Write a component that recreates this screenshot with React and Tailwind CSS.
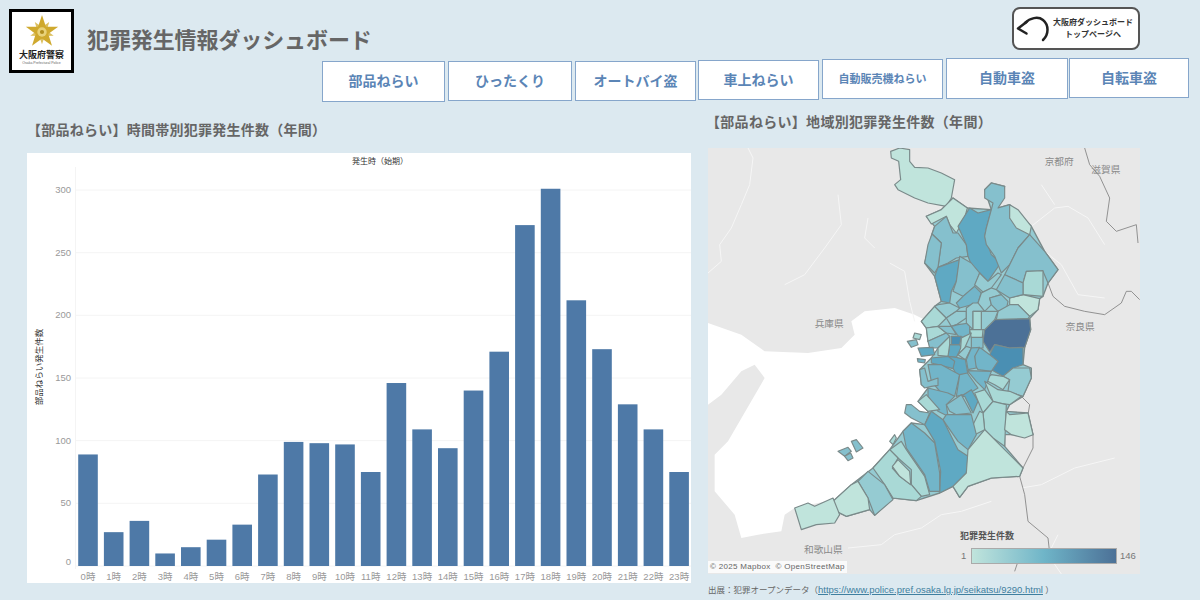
import React from 'react';

const navItems = [
  { label: '部品ねらい', cls: 'w-[123px] h-[41px] mt-[3px] text-[14px]' },
  { label: 'ひったくり', cls: 'w-[124px] h-[40px] mt-[3px] ml-[3px] text-[14px]' },
  { label: 'オートバイ盗', cls: 'w-[121px] h-[40px] mt-[3px] ml-[3px] text-[14px]' },
  { label: '車上ねらい', cls: 'w-[121px] h-[40px] mt-[2px] ml-[2px] text-[14px]' },
  { label: '自動販売機ねらい', cls: 'w-[121px] h-[40px] mt-[1px] ml-[3px] text-[11px]' },
  { label: '自動車盗', cls: 'w-[122px] h-[41px] ml-[3px] text-[14px]' },
  { label: '自転車盗', cls: 'w-[120px] h-[40px] ml-[1px] text-[14px]' },
];

const hours = [89, 27, 36, 10, 15, 21, 33, 73, 99, 98, 97, 75, 146, 109, 94, 140, 171, 272, 301, 212, 173, 129, 109, 75];
const ticks = [0, 50, 100, 150, 200, 250, 300];

// zero line and scale in panel coordinates (panel origin 27,153)
const BASE = 413;
const SCALE = 1.2533;

const L0 = '#c0e4dc';
const L1 = '#a9d9d6';
const L2 = '#95cbd2';
const M1 = '#85c0cd';
const M2 = '#72b5c9';
const D1 = '#5fa9c3';
const D2 = '#4a8fb3';
const D3 = '#4c7197';

// everything below is in the map's 3x coordinates (1296x1278)
const land = '650,345 672,258 680,235 655,205 700,185 735,150 778,180 850,185 830,125 850,105 890,115 870,180 905,170 970,235 1010,310 1050,365 1020,405 1005,445 995,452 990,485 965,512 968,545 950,598 945,650 970,660 970,690 945,745 905,770 895,790 960,795 975,860 890,860 890,895 945,960 935,985 850,990 780,1015 755,1048 735,1015 695,1035 625,1058 555,1050 500,1102 485,1085 415,1105 385,1090 375,1060 430,1010 495,960 545,905 585,850 610,825 650,830 660,790 630,760 660,720 640,710 635,665 670,630 690,600 660,580 655,540 640,520 680,475 700,460 680,385';

const regions = [
  [L0, '548,10 575,0 605,5 605,40 620,58 660,60 700,75 740,95 730,150 715,175 660,165 620,150 570,125 560,110 578,95 572,40 550,30'],
  [L0, '655,205 700,185 735,150 778,180 770,210 745,255 725,230 715,205 670,228'],
  [M1, '680,235 715,205 735,255 750,255 775,290 780,325 745,330 720,345 690,358 700,285 672,258'],
  [M1, '672,258 700,285 690,358 680,375 650,345 660,290'],
  [D1, '750,235 785,180 810,195 850,185 835,240 830,265 850,320 878,345 840,400 815,375 790,350 780,325 775,290'],
  [M1, '850,185 855,165 830,150 830,125 850,105 890,115 890,150 870,180 905,170 905,210 965,260 930,300 905,350 880,375 860,325 835,290 830,265 835,240'],
  [L0, '905,170 930,185 970,235 965,260 925,240 905,210'],
  [M1, '965,260 1010,310 1050,365 1020,405 1005,370 955,370 945,405 890,380 930,300'],
  [L1, '955,370 1005,368 1005,445 945,440 945,405'],
  [L0, '905,450 945,440 995,452 990,485 965,505 930,470 905,470'],
  [M1, '890,380 945,405 945,440 905,450 865,425'],
  [D1, '690,358 755,335 745,400 730,430 725,465 700,460 680,385'],
  [M1, '755,325 790,345 815,375 800,415 765,445 735,430 745,400'],
  [L2, '815,375 840,400 870,375 880,380 850,420 825,432 800,410'],
  [M2, '765,445 800,415 820,435 810,465 755,480 745,465'],
  [L2, '820,435 850,420 865,425 880,440 845,450 850,470 830,490 810,465'],
  [M1, '845,450 880,440 900,460 895,485 870,490 850,470'],
  [L2, '870,490 905,470 930,470 965,505 960,512 865,515'],
  [D3, '860,515 965,512 968,545 950,598 905,600 860,590 845,612 825,580 830,545'],
  [D2, '860,590 905,600 945,598 945,650 915,660 885,685 850,665 870,640 845,620'],
  [M2, '800,600 815,598 845,620 870,640 850,670 810,665 800,650'],
  [L2, '885,685 915,660 965,660 970,690 945,745 900,730 905,695'],
  [L1, '830,695 850,680 885,685 905,695 885,725 860,710'],
  [L1, '640,520 680,475 715,510 690,535 655,540'],
  [L2, '690,470 725,465 755,480 745,490 715,510 680,475'],
  [L1, '655,540 690,535 715,555 660,580'],
  [L2, '715,510 745,490 775,490 775,510 745,530 730,535'],
  [M1, '690,535 730,535 745,560 715,555'],
  [M1, '660,580 715,555 725,565 690,600 665,600'],
  [M2, '750,530 785,525 785,560 755,570 730,535'],
  [L2, '775,480 795,465 810,465 830,490 795,490 795,545 775,525'],
  [L2, '830,490 870,490 860,515 830,545 820,545 820,490'],
  [L1, '795,490 820,490 820,545 795,545'],
  [L1, '785,545 825,545 823,568 790,570'],
  [D1, '725,590 755,590 760,600 745,628 720,625'],
  [D2, '730,565 760,565 755,590 730,590'],
  [L1, '690,600 725,565 725,590 720,625 690,622'],
  [L1, '760,570 790,555 770,600 750,620 758,600'],
  [M1, '790,568 825,568 825,600 790,600'],
  [L2, '750,620 775,595 790,600 772,635'],
  [M2, '775,635 790,600 815,598 800,625 805,660 780,665'],
  [D1, '720,625 745,628 772,635 780,680 745,680 735,660'],
  [D1, '670,630 720,625 740,640 735,662 690,650 670,645'],
  [M2, '660,650 700,650 755,680 740,745 700,735 670,700'],
  [M2, '755,680 778,675 810,720 785,735 745,745'],
  [M2, '778,668 850,670 830,725 805,700'],
  [M1, '598,580 625,575 630,590 610,598'],
  [L1, '620,555 640,560 635,575 615,570'],
  [D1, '630,600 675,598 680,620 640,625'],
  [M2, '628,632 652,635 650,645 630,642'],
  [M1, '635,665 650,660 660,700 690,690 690,712 670,715 650,720 640,710'],
  [M2, '660,720 720,735 740,745 715,770 720,805 690,790 660,745'],
  [L1, '630,760 655,740 695,785 660,790'],
  [M1, '595,770 610,770 635,790 665,795 650,830 610,810 590,795'],
  [D1, '790,725 810,760 795,795 770,745 760,745'],
  [M1, '715,770 760,740 790,795 745,800 725,790'],
  [L1, '800,735 830,725 855,760 825,795'],
  [L1, '830,700 870,725 905,730 940,745 905,770 870,765 855,760'],
  [L1, '825,795 855,760 895,770 890,895 855,870 830,845'],
  [L0, '895,790 905,800 960,795 975,860 950,870 910,860 890,845'],
  [L1, '815,790 825,795 830,845 800,860 795,830'],
  [M2, '705,815 715,800 790,800 805,860 780,905 750,880 715,830'],
  [D1, '650,830 670,790 705,815 750,905 780,925 775,975 735,1015 695,1035 698,970 680,880'],
  [M2, '585,850 610,825 650,855 680,885 695,975 695,1030 665,1030 650,980 595,900'],
  [L0, '780,905 830,845 880,895 945,960 935,985 850,990 780,1015 755,1048 735,1015 775,975'],
  [L1, '545,905 580,880 595,905 650,985 665,1040 640,1045 610,1010 610,965 570,930'],
  [L1, '495,960 545,905 570,930 553,960 575,985 610,1010 640,1045 625,1058 555,1050 530,1010'],
  [L0, '553,955 570,935 605,970 608,1010 575,985'],
  [L2, '450,1000 480,970 530,1010 555,1055 500,1102 480,1050'],
  [L0, '375,1060 430,1010 450,1000 480,1050 485,1085 415,1105 385,1090'],
  [L0, '260,1080 300,1065 320,1075 375,1050 395,1100 380,1125 325,1130 280,1145'],
  [L1, '545,880 560,860 565,870 555,890'],
  [M1, '390,910 420,898 430,910 410,925'],
  [M1, '430,880 445,875 465,900 445,912'],
  [M1, '410,925 428,915 435,930 420,938'],
];

const rivers = [
  '0,375 40,340 35,290 70,240 100,170 125,110 135,30 120,0',
  '545,345 590,370 605,460 620,520',
  '970,235 1040,180 1080,175 1140,210 1190,290',
  '1010,310 1060,350 1110,440 1190,450',
  '1000,110 1040,170',
  '230,410 290,380 350,300 400,230 390,140',
  '420,1200 520,1190 560,1160 640,1140 700,1100 760,1090 850,1060',
  '940,1020 1000,1010 1100,960 1220,930',
  '1060,1278 1020,1220 1050,1160',
  '480,210 470,270 500,300',
];

const borders = [
  '1020,405 1035,445 1070,475 1130,490 1190,500 1240,465 1255,430 1270,430 1295,455',
  '1130,0 1145,50 1175,85 1205,150 1195,220 1225,250 1285,230 1290,285',
  '935,985 950,1040 960,1120 1020,1170 1025,1215 970,1215 935,1225 920,1270',
  '940,745 965,770 960,800 975,860 975,900 945,960',
];

const mapLabels = [
  ['京都府', 1010, 50],
  ['滋賀県', 1150, 76],
  ['兵庫県', 320, 538],
  ['奈良県', 1073, 547],
  ['和歌山県', 288, 1215],
];

function Logo() {
  const rays = [0, 72, 144, 216, 288];
  const minor = [36, 108, 180, 252, 324];
  return (
    <div className="w-[65px] h-[64px] shrink-0 border-[3px] border-black bg-white flex flex-col items-center">
      <svg width="36" height="34" viewBox="-18 -18 36 36" className="mt-[3px]">
        {minor.map((a) => (
          <polygon key={a} points="-3.5,-3 0,-13 3.5,-3" fill="#dcc060" transform={`rotate(${a})`} />
        ))}
        {rays.map((a) => (
          <polygon key={a} points="-5,-3 0,-18 5,-3" fill="#cfa92e" transform={`rotate(${a})`} />
        ))}
        <circle r="5" fill="#e8d27a" />
        <circle r="2.2" fill="#b08d1e" />
      </svg>
      <div className="text-[9px] leading-[11px] font-bold text-[#222] mt-[1px]">大阪府警察</div>
      <div className="text-[3.5px] leading-[5px] text-[#666]">Osaka Prefectural Police</div>
    </div>
  );
}

function BarChart() {
  return (
    <div className="w-[664px] h-[430px] bg-white">
      <svg width="664" height="430" viewBox="0 0 664 430">
        <text x="353" y="11" fontSize="8" fill="#333" textAnchor="middle">発生時（始期）</text>
        <text transform="translate(15,214) rotate(-90)" fontSize="8.5" fill="#333" textAnchor="middle">部品ねらい発生件数</text>
        <line x1="48.5" y1="14" x2="48.5" y2="416" stroke="#f4f4f4" />
        {ticks.map((t) => (
          <g key={t}>
            <line x1="48" x2="664" y1={BASE - t * SCALE} y2={BASE - t * SCALE} stroke="#f4f4f4" />
            <text x="44" y={BASE - t * SCALE + (t === 0 ? -1 : 3)} fontSize="9.5" fill="#999" textAnchor="end">{t}</text>
          </g>
        ))}
        {hours.map((v, i) => (
          <g key={i}>
            <rect x={51.2 + i * 25.7} y={BASE - v * SCALE} width="19.6" height={v * SCALE} fill="#4e79a7" />
            <text x={61 + i * 25.7} y="427" fontSize="9.5" fill="#999" textAnchor="middle">{i}時</text>
          </g>
        ))}
      </svg>
    </div>
  );
}

function OsakaMap() {
  return (
    <div className="relative w-[432px] h-[426px] bg-[#e8e8e8] overflow-hidden">
      <svg width="432" height="426" viewBox="0 0 1296 1278" className="block">
        {/* sea, runs under the coastal wards */}
        <polygon
          fill="#ffffff"
          points="0,525 100,560 170,610 300,615 400,600 440,560 430,520 470,490 560,480 620,500 680,530 700,600 700,740 660,790 640,850 600,890 520,960 460,1010 400,1050 260,1080 230,1100 220,1150 150,1160 100,1170 80,1100 20,1030 20,920 60,880 170,690 140,650 100,670 40,740 0,770"
        />
        {rivers.map((p, i) => (
          <polyline key={i} points={p} fill="none" stroke="#f6f6f6" strokeWidth="3" />
        ))}
        {borders.map((p, i) => (
          <polyline key={i} points={p} fill="none" stroke="#808080" strokeWidth="2.5" strokeLinejoin="round" />
        ))}
        {mapLabels.map(([t, x, y]) => (
          <text key={t} x={x} y={y} fontSize="29" fill="#8a8a8a">{t}</text>
        ))}
        <polygon points={land} fill={L2} stroke="#7a8a8a" strokeWidth="4" strokeLinejoin="round" />
        {regions.map(([fill, pts], i) => (
          <polygon key={i} points={pts} fill={fill} stroke="#7a8a8a" strokeWidth="3.5" strokeLinejoin="round" />
        ))}
      </svg>
      <div className="absolute left-0 bottom-[1px] bg-white/80 px-[2px] text-[8px] leading-[12px] tracking-[0.3px] text-[#666]">© 2025 Mapbox&nbsp;&nbsp;© OpenStreetMap</div>
      <div className="absolute left-[252px] top-[382px] text-[9px] leading-[12px] font-bold text-[#555]">犯罪発生件数</div>
      <div className="absolute left-[253px] top-[401px] text-[9.5px] leading-[14px] text-[#777]">1</div>
      <div className="absolute left-[263px] top-[400px] w-[146px] h-[16px] border border-[#aaa] bg-linear-to-r from-[#c0e4dc] via-[#6fb5c8] to-[#4c7197]" />
      <div className="absolute left-[412px] top-[401px] text-[9.5px] leading-[14px] text-[#777]">146</div>
    </div>
  );
}

export default function App() {
  return (
    <div className="w-[1200px] h-[600px] overflow-hidden bg-[#dce9f0] font-['Liberation_Sans','Noto_Sans_CJK_JP',sans-serif]">
      {/* header */}
      <div className="flex h-[102px]">
        <div className="w-[322px] shrink-0 flex items-start pl-[9px] pt-[9px]">
          <Logo />
          <h1 className="ml-[13px] mt-[15px] text-[22px] leading-[34px] font-bold tracking-[-0.1px] text-[#666] whitespace-nowrap">犯罪発生情報ダッシュボード</h1>
        </div>
        <div className="flex flex-col pt-[7px]">
          <button className="ml-[690px] w-[128px] h-[43px] shrink-0 flex items-center rounded-[8px] border-2 border-[#555] bg-white">
            <svg width="34" height="30" viewBox="0 0 34 30" className="ml-[2px] shrink-0">
              <path d="M9 9 C14 4 22 2 27 6 C33 11 33 20 27 26" fill="none" stroke="#222" strokeWidth="2.5" strokeLinecap="round" />
              <path d="M10.5 8 L2 14.5 L10.5 19.5" fill="none" stroke="#222" strokeWidth="2.5" strokeLinecap="round" strokeLinejoin="round" />
            </svg>
            <span className="flex-1 text-center text-[8px] leading-[12px] font-bold text-[#333] pr-[2px] whitespace-nowrap">大阪府ダッシュボード<br />トップページへ</span>
          </button>
          <nav className="flex items-start mt-[8px]">
            {navItems.map((item) => (
              <button
                key={item.label}
                className={`${item.cls} shrink-0 border border-[#86a6cb] bg-white font-bold text-[#5b85b6] whitespace-nowrap`}
              >
                {item.label}
              </button>
            ))}
          </nav>
        </div>
      </div>

      {/* body */}
      <div className="flex pl-[27px]">
        <section className="w-[664px] shrink-0">
          <h2 className="mt-[19px] mb-[14px] text-[14px] leading-[18px] font-bold tracking-[0.25px] text-[#666] whitespace-nowrap">【部品ねらい】時間帯別犯罪発生件数（年間）</h2>
          <BarChart />
        </section>
        <section className="ml-[17px] w-[460px]">
          <h2 className="mt-[11px] mb-[17px] -ml-[2px] text-[14px] leading-[18px] font-bold tracking-[0.3px] text-[#666] whitespace-nowrap">【部品ねらい】地域別犯罪発生件数（年間）</h2>
          <OsakaMap />
          <p className="mt-[10px] text-[8.5px] leading-[12px] text-[#666] whitespace-nowrap">
            出展：犯罪オープンデータ（<a className="underline text-[#3f7f9f] text-[9.5px]" href="#">https://www.police.pref.osaka.lg.jp/seikatsu/9290.html</a> ）
          </p>
        </section>
      </div>
    </div>
  );
}
